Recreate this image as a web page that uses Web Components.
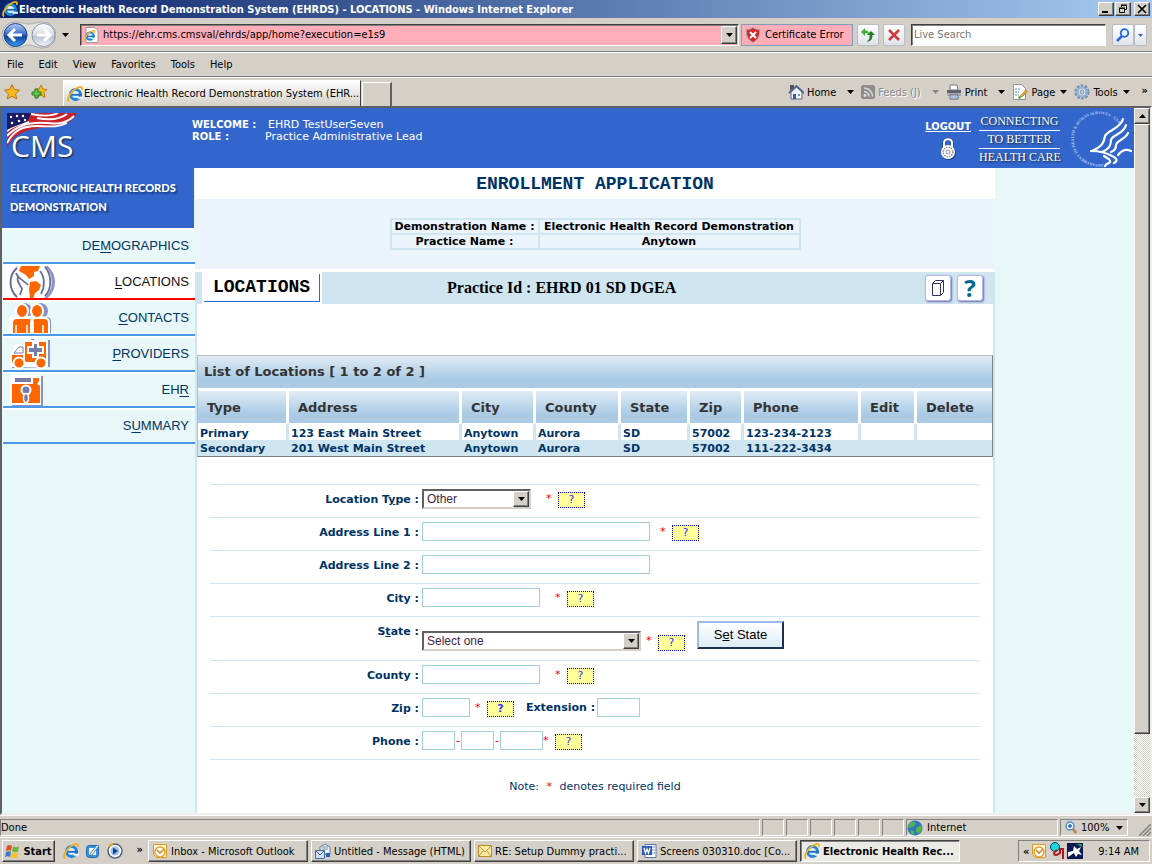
<!DOCTYPE html>
<html lang="en">
<head>
<meta charset="utf-8">
<title>Electronic Health Record Demonstration System (EHRDS) - LOCATIONS</title>
<style>
  html, body {
    margin: 0;
    height: 100%;
  }

  body {
    --face: #d4d0c8;
    --shadow: #808080;
    --blue: #3366cc;
    --pale: #cfe5f0;
    --mint: #e8f7f8;
    --navy: #003366;
    --ui: "DejaVu Sans Condensed", "Noto Sans", sans-serif;
    --text: "DejaVu Sans", sans-serif;
    background: var(--face);
    color: #000;
    font: 11px/13px var(--ui);
    overflow: hidden;
  }
</style>
</head>
<body>
<browser-window></browser-window>

<script>
const define = (name, css, html) => {
  const template = document.createElement('template');
  template.innerHTML = `<style>*, :host { box-sizing: border-box; } ${css}</style>${html}`;

  window.customElements.define(name, class extends HTMLElement {
    constructor() {
      super();
      this.attachShadow({ mode: 'open' });
      this.shadowRoot.appendChild(template.content.cloneNode(true));
    }
  });
};

const ie = `
  <circle cx="8.500" cy="8.500" r="5" fill="#d9f0fd" stroke="#2486d8" stroke-width="3"/>
  <path d="M10 10.800h6v2h-5z" fill="#eef3f5"/>
  <path d="M4 8.800h11" stroke="#1c6cc0" stroke-width="1.800"/>
  <path d="M2 15.500C-1 13 4 5 10 2c4-2 6-1 4.500 2" fill="none" stroke="#f2b01e" stroke-width="1.800"/>`;

// name: [width, height, markup]
const icons = {
  ie: [16, 16, ie],
  iepage: [16, 16, `<path d="M3 .5h9l3 3v12H3z" fill="#fff" stroke="#999"/><g transform="translate(1 3) scale(.72)">${ie}</g>`],
  down: [7, 4, '<path d="M0 0h7L3.500 4z"/>'],
  up: [7, 4, '<path d="M0 4h7L3.500 0z"/>'],
  greydown: [7, 4, '<path d="M0 0h7L3.500 4z" fill="#888"/>'],
  min: [12, 10, '<path d="M2 7h6v2H2z"/>'],
  restore: [12, 10, '<path d="M4.500 3V1.500h5v4H8M4 1h6" fill="none" stroke="#000"/><path d="M2.500 4.500h5v4h-5zM2 4h6" fill="none" stroke="#000"/>'],
  close: [12, 10, '<path d="M2 1l8 8M10 1l-8 8" stroke="#000" stroke-width="1.700"/>'],
  back: [54, 28, `
    <defs>
      <linearGradient id="b" x2="0" y2="1"><stop stop-color="#b4ccf2"/><stop offset=".5" stop-color="#2f66c4"/><stop offset=".55" stop-color="#0f3f9c"/><stop offset="1" stop-color="#3ca0f0"/></linearGradient>
      <linearGradient id="f" x2="0" y2="1"><stop stop-color="#fff"/><stop offset=".5" stop-color="#d5dae4"/><stop offset=".55" stop-color="#b9c3d6"/><stop offset="1" stop-color="#eef2fa"/></linearGradient>
    </defs>
    <path d="M13 1C20 1 22 3 27 3s7-2 14-2a13 13 0 0 1 0 26c-7 0-9-3-14-3s-7 3-14 3A13 13 0 0 1 13 1z" fill="#e4e2dd" stroke="#aaa"/>
    <circle cx="13.500" cy="14" r="11.500" fill="url(#b)" stroke="#1c3f86"/>
    <circle cx="41.500" cy="14" r="11.500" fill="url(#f)" stroke="#8b95a8"/>
    <path d="M20 14H8m5-6-6 6 6 6" fill="none" stroke="#fff" stroke-width="3"/>
    <path d="M35 14h12m-5-6 6 6-6 6" fill="none" stroke="#fff" stroke-width="3"/>`],
  shield: [16, 16, '<path d="M8 .5c2 1.500 4 2 6.500 2 .5 6-1 10-6.500 13C2.500 12.500 1 8.500 1.500 2.500 4 2.500 6 2 8 .5z" fill="#d22a2a" stroke="#a9a9a9"/><path d="M5 5l6 6M11 5l-6 6" stroke="#fff" stroke-width="2"/>'],
  refresh: [16, 16, '<path d="M1 5l4-4v2.500c3 0 4 1 4 4C8 6.500 7 6 5 6.500V9z" fill="#3fae3c"/><path d="M15 8l-4-4-4 4h2.500c.5 3-.5 5-3 6.500 4 .5 6-2 6-6.500z" fill="#1f7d26"/>'],
  stop: [14, 14, '<path d="M2 2l10 10M12 2L2 12" stroke="#d3383c" stroke-width="2.500"/>'],
  search: [14, 14, '<circle cx="8.500" cy="5" r="3.800" fill="#e9f3ff" stroke="#2567d8" stroke-width="1.800"/><path d="M6 8l-5 5" stroke="#2567d8" stroke-width="2.500"/>'],
  bluedown: [5, 3, '<path d="M0 0h5L2.500 3z" fill="#2b6fc6"/>'],
  star: [16, 16, '<path d="M8 .5l2.300 5 5.200.6-3.900 3.600 1.100 5.300L8 12.300 3.300 15l1.100-5.300L.5 6.100l5.200-.6z" fill="#f8b820" stroke="#b97514"/>'],
  addstar: [16, 16, '<path d="M10 1l2 4 4 .5-3 3 .8 5-4-2.500-4 2.500 1-5-3-3L8 5z" fill="#f8b820" stroke="#c07c15"/><path d="M4 5h3v3h3v3H7v3H4v-3H1V8h3z" fill="#65c64a" stroke="#1c7a1c"/>'],
  home: [16, 16, '<path d="M3 8v7h11V8L8.500 3z" fill="#eef3ff" stroke="#667"/><path d="M2 1h4v3L2 7z" fill="#555"/><path d="M1 9l7.500-7L16 9" fill="none" stroke="#52688f" stroke-width="2"/><path d="M5 10h3v5H5z" fill="#345a9c"/><path d="M10 10h2v2h-2z" fill="#6a8cc8"/>'],
  feed: [14, 14, '<rect width="14" height="14" rx="2" fill="#8d8d8d"/><circle cx="4" cy="10.500" r="1.400" fill="#ddd"/><path d="M3 6.500a5 5 0 0 1 5 5M3 3a8.500 8.500 0 0 1 8.500 8.500" fill="none" stroke="#ddd" stroke-width="1.500"/>'],
  print: [16, 16, '<path d="M4 1h7l1 5H4z" fill="#fff" stroke="#777"/><path d="M1 6h14v5H1z" fill="#5f6470"/><path d="M1 9h14v3H1z" fill="#a7abb5"/><path d="M4 11h8v4H4z" fill="#fff" stroke="#557"/><path d="M5 13h6" stroke="#4d94d8"/>'],
  page: [16, 16, '<path d="M1.500.5h8l4 4v11h-12z" fill="#fff" stroke="#8a93a2"/><path d="M3 5h5M3 8h4M3 11h4" stroke="#5c86c0" stroke-dasharray="2 1"/><path d="M8 13l1-2 5-5 1.500 1.500-5 5z" fill="#e9a02c" stroke="#a36b1a" stroke-width=".6"/><path d="M8.500 13l-2 1" stroke="#28a028" stroke-width="2"/>'],
  gear: [16, 16, '<circle cx="8" cy="8" r="6.300" fill="none" stroke="#6d8db3" stroke-width="2.500" stroke-dasharray="2.500 1.450"/><circle cx="8" cy="8" r="4.500" fill="#e6f0fa" stroke="#93b1d2" stroke-width="2.500"/><circle cx="8" cy="8" r="2" fill="#d4d0c8" stroke="#6d8db3"/>'],
  lock: [18, 24, '<path d="M5 12V6c0-5 8-5 8 0v5" fill="none" stroke="#1b3a80" stroke-width="3"/><path d="M5 12V6c0-5 8-5 8 0v5" fill="none" stroke="#fff" stroke-width="2"/><circle cx="10" cy="16" r="7" fill="#1f458f"/><circle cx="9" cy="15" r="7" fill="#fff"/><circle cx="9" cy="15" r="4.800" fill="none" stroke="#777" stroke-width="1.200" stroke-dasharray="1.500 1"/><circle cx="9" cy="15" r="2" fill="none" stroke="#888"/>'],
  flag: [70, 36, `
    <path d="M0 0h70c-4 8-12 13-24 14C26 15 6 18 0 36z" fill="#c9202a"/>
    <path d="M30 5c10 2 22 2 30-4M67 3c-8 8-18 8-28 7-14-1-28 1-39 13M60 10C50 15 40 13 30 13 16 13 7 17 0 30M24 1c10 2 20 3 27-1M22 9C12 11 5 13 0 18" fill="none" stroke="#fff" stroke-width="1.900"/>
    <path d="M0 0h24l-3 8C14 12 6 13 0 17z" fill="#1c1c62"/>
    <g fill="#fff"><circle cx="4" cy="4" r="1.200"/><circle cx="10" cy="3" r="1.200"/><circle cx="16" cy="3" r="1.200"/><circle cx="5" cy="10" r="1.200"/><circle cx="12" cy="8" r="1.200"/><circle cx="18" cy="7" r="1.200"/></g>`],
  seal: [64, 60, `
    <defs><path id="ring" d="M33.300 55.600A25 25 0 1 1 51.500 20.500"/></defs>
    <text font-family="Liberation Serif, serif" font-size="4" font-weight="bold" fill="#b9cdf2"><textPath href="#ring">DEPARTMENT OF HEALTH &amp; HUMAN SERVICES · USA</textPath></text>
    <g fill="none" stroke="#fff" stroke-width="2.200" stroke-linecap="round" stroke-linejoin="round">
      <path d="M53 11C51 20 37 23 35 28c-1 6-2 10-13 15"/>
      <path d="M56 17C54 26 42 27 41 32c0 6-2 9-9 12"/>
      <path d="M58 25C56 31 47 32 46 37c0 4-2 6-5 7"/>
      <path d="M21 43c10 0 16 2 21 5 5 2 6 5 2 7M34 48c5 3 8 5 5 7-2 1-3 1-4 3M61 43c-6-3-10 0-13 4"/>
    </g>`],
  globe: [46, 36, `
    <circle cx="25" cy="18" r="21" fill="#8b8fc4"/><circle cx="22" cy="18" r="21" fill="#fff" stroke="#b4b6dc"/>
    <path d="M12 2h19l-2 5-4 1v4l-5 3-3-4-7-4zM21 18l6-1 5 4-2 5-4 3-2 6-3-1-1-8z" fill="#f60"/>
    <path d="M8 4C-1 12 0 26 8 33M36 3c7 8 7 22 0 29M7 9c2 6 9 8 12 12M9 13c-2 5 3 8 4 12l-2 6M31 7c5 6 5 16 1 23" fill="none" stroke="#6a6d90" stroke-width="1.800"/>`],
  people: [44, 30, `
    <g fill="#8b8fc4"><circle cx="15" cy="8" r="8"/><circle cx="31" cy="8" r="8"/><path d="M2 30V19q0-5 5-5h30q5 0 5 5v11z"/></g>
    <path d="M0 30V19q0-6 6-6h27q7 0 7 6v11" fill="#fff"/>
    <g fill="#f60" stroke="#fff" stroke-width="2"><ellipse cx="13" cy="8" rx="6" ry="7"/><ellipse cx="28" cy="8" rx="6" ry="7"/><path d="M3 31V20q0-5 5-5h11q5 0 5 5v11M22 31V20q0-5 5-5h8q5 0 5 5v11"/></g>
    <path d="M7 22v8M18 22v8M34 22v8" stroke="#fff" stroke-width="1.500"/>`],
  ambulance: [42, 32, `
    <path d="M3 30V16l7-9h7V1h8v1h16v27z" fill="#8b8fc4"/>
    <path d="M1 29V15l7-9h7V0h7v2h17v27z" fill="#fff"/>
    <path d="M16 4h21v20H16zM3 17h11v8H3z" fill="#f60"/>
    <path d="M5 15l5-6h4v6z" fill="#fff" stroke="#777ba8"/>
    <path d="M23 4h7v4h5v8h-5v4h-7v-4h-5V8h5z" fill="#fff"/>
    <path d="M25 6h3v4h5v4h-5v4h-3v-4h-5v-4h5z" fill="#777ba8"/>
    <g fill="#f60" stroke="#fff" stroke-width="2"><circle cx="10" cy="25" r="5.500"/><circle cx="32" cy="25" r="5.500"/></g>`],
  disk: [34, 32, `
    <path d="M3 2h31v30H3z" fill="#8b8fc4"/><path d="M1 1h31v30H1z" fill="#fff"/>
    <path d="M3 10h21V4h6v3l-2 3 3 2v17H3z" fill="#f60"/><path d="M6 4h16v4H6z" fill="#777ba8"/>
    <circle cx="17" cy="16" r="4.500" fill="#777ba8" stroke="#fff" stroke-width="2"/><ellipse cx="17" cy="24" rx="2.500" ry="4.500" fill="#777ba8" stroke="#fff" stroke-width="1.500"/>`],
  copy: [14, 18, '<path d="M1.500 4.500h8v12h-8z" fill="#fff" stroke="#336"/><path d="M1.500 4.500l3-3h8v12l-3 3M9.500 4.500l3-3" fill="none" stroke="#336"/>'],
  inet: [16, 16, '<circle cx="8" cy="8" r="7.500" fill="#2d72c4"/><path d="M3 3c3-2 6-1 6 1L6 7 3 8 1 7zM9 8l5-3 1 4-3 5-3-2zM3 10l4 1v4l-3-1z" fill="#51b548"/>'],
  zoom: [12, 14, '<circle cx="5" cy="5" r="4" fill="#eaf4ff" stroke="#4f86c6" stroke-width="1.400"/><path d="M3 5h4M5 3v4" stroke="#1f5fb8" stroke-width="1.400"/><path d="M8 8l3 4" stroke="#b58142" stroke-width="2.500"/>'],
  grip: [12, 12, '<path d="M0 12L12 0M4 12l8-8M8 12l4-4" stroke="#808080" stroke-width="1.500"/>'],
  win: [16, 14, '<path d="M2 2q3-2 5 0L6 7q-2-1.500-5 0z" fill="#e44d25"/><path d="M8 2.500q3 1.500 6 0l-1 5q-3 1.500-6 0z" fill="#6fb43a"/><path d="M1 8q3-1.500 5 0l-1 5q-2-1.500-5 0z" fill="#3b78d0"/><path d="M7 8.500q3 1.500 6 0l-1 5q-3 1.500-6 0z" fill="#f3c22c"/>'],
  desktop: [16, 16, '<rect x="1.500" y="2.500" width="12" height="12" rx="3" fill="#3b93e0" stroke="#1c62a8"/><path d="M4 5h7v7H4z" fill="#fff"/><path d="M5 11l7-9 2 1-7 9-2 1z" fill="#e8f3ff" stroke="#245ea8" stroke-width=".8"/>'],
  media: [16, 16, '<circle cx="8" cy="8" r="7" fill="#fff" stroke="#55627a" stroke-width="1.500"/><circle cx="8" cy="8" r="4.500" fill="#9cc0f0"/><path d="M6 4.500l5 3.500-5 3.500z" fill="#1c3f90"/><path d="M2 4a7 7 0 0 1 4-3" stroke="#e2a22c" stroke-width="2" fill="none"/>'],
  outlook: [16, 16, '<path d="M1.500 1.500h13v13h-10l-3-3z" fill="#fff5d8" stroke="#dc9a22"/><circle cx="8" cy="9" r="5" fill="#fff" stroke="#e3a02e" stroke-width="1.500"/><path d="M5 7l3 3 4-4" fill="none" stroke="#d28e18" stroke-width="1.600"/>'],
  message: [16, 16, '<path d="M5 4l5-3 5 3v7H5z" fill="#e8f1ff" stroke="#5c7ea8"/><path d="M7 4h6M7 6h6" stroke="#888"/><path d="M.5 7.500h9v8h-9z" fill="#cfe0f7" stroke="#4a6a96"/><path d="M1 8l4 4 4-4" fill="none" stroke="#4a6a96"/><path d="M11 10h4v4h-4z" fill="#2d5db2"/>'],
  mail: [14, 12, '<path d="M.5.500h13v11H.500z" fill="#ffe9a6" stroke="#bf8a22"/><path d="M1 1l6 6 6-6M1 11l4-5M13 11L9 6" fill="none" stroke="#c99430"/>'],
  word: [16, 16, '<path d="M4 1.500h11v13H4z" fill="#fff" stroke="#5675ae"/><path d="M11 4h3M11 7h3M11 10h3" stroke="#7894c8"/><path d="M1 3h10v9H1z" fill="#2c5db4"/><path d="M3 5l1.500 5L6 6l1.500 4L9 5" fill="none" stroke="#fff" stroke-width="1.300"/>'],
  net: [16, 18, '<circle cx="6" cy="5" r="4.500" fill="#19d8dc" stroke="#045"/><path d="M8 8c-6 4-2 7 3 3V7h3v10" fill="none" stroke="#b01820" stroke-width="2"/>'],
  tools: [16, 16, '<path fill="#0b1a55" d="M0 0h16v16H0z"/><path d="M1 9l5-1 1-5 3 3 4-2-2 4 3 4-4-1-2 3-2-4-6 4z" fill="#fff"/><path d="M9 1h6v3z" fill="#25a045"/>']
};

window.customElements.define('ui-icon', class extends HTMLElement {
  constructor() {
    super();
    this.attachShadow({ mode: 'open' });
  }

  connectedCallback() {
    const [w, h, body] = icons[this.getAttribute('name')];
    this.shadowRoot.innerHTML = `
      <style>:host { display: inline-block; flex: none; line-height: 0; }</style>
      <svg width="${w}" height="${h}" viewBox="0 0 ${w} ${h}" aria-hidden="true">${body}</svg>`;
  }
});

const raised = `
  padding: 0;
  display: flex;
  align-items: center;
  justify-content: center;
  font: inherit;
  color: inherit;
  background: var(--face);
  border: 1px solid;
  border-color: #fff #404040 #404040 #fff;
  box-shadow: inset -1px -1px var(--shadow);
`;

define('title-bar', `
  :host {
    display: flex;
    align-items: center;
    height: 18px;
    padding: 0 2px;
    gap: 1px;
    background: linear-gradient(90deg, #0a246a, #a6caf0);
    color: #fff;
    font-weight: bold;
  }
  h1 { flex: 1; margin: 0; font: inherit; white-space: nowrap; }
  button { ${raised} width: 16px; height: 14px; }
  .close { margin-left: 2px; }
`, `
  <ui-icon name="ie"></ui-icon>
  <h1>Electronic Health Record Demonstration System (EHRDS) - LOCATIONS - Windows Internet Explorer</h1>
  <button aria-label="Minimize"><ui-icon name="min"></ui-icon></button>
  <button aria-label="Restore"><ui-icon name="restore"></ui-icon></button>
  <button class="close" aria-label="Close"><ui-icon name="close"></ui-icon></button>
`);

define('address-bar', `
  :host {
    display: flex;
    align-items: center;
    height: 34px;
    padding: 0 5px 0 2px;
    gap: 4px;
    border-bottom: 1px solid var(--shadow);
  }
  .arrows { padding: 0; border: 0; background: none; display: flex; }
  .more { margin: 0 7px 0 2px; }
  .url, .search {
    display: flex;
    align-items: center;
    height: 22px;
    border: 1px solid;
    border-color: #404040 #fff #fff #404040;
    box-shadow: inset 1px 1px var(--shadow);
  }
  .url { flex: 1; padding: 1px 1px 1px 2px; gap: 2px; background: #ffaeb9; }
  input { flex: 1; min-width: 0; border: 0; padding: 0 2px; background: none; font: inherit; color: #000; }
  .search { width: 195px; background: #fff; margin-left: 2px; }
  .search input::placeholder { color: #777; opacity: 1; }
  .drop { ${raised} width: 16px; height: 18px; }
  .cert {
    display: flex;
    align-items: center;
    gap: 4px;
    width: 112px;
    height: 22px;
    padding: 0 3px;
    margin-left: -2px;
    border: 1px solid #7f9db9;
    background: #ffaeb9;
    font: inherit;
    color: #000;
  }
  .tool {
    display: flex;
    align-items: center;
    justify-content: center;
    width: 22px;
    height: 22px;
    padding: 0;
    border: 1px solid #b9bcc4;
    border-radius: 2px;
    background: linear-gradient(#fff, #dfe3ea);
  }
  .pair { display: flex; margin-left: 2px; }
  .thin { width: 13px; }
`, `
  <button class="arrows" aria-label="Back and forward"><ui-icon name="back"></ui-icon></button>
  <ui-icon class="more" name="down"></ui-icon>
  <div class="url">
    <ui-icon name="iepage"></ui-icon>
    <input type="text" aria-label="Address" value="https://ehr.cms.cmsval/ehrds/app/home?execution=e1s9">
    <button class="drop" aria-label="Show addresses"><ui-icon name="down"></ui-icon></button>
  </div>
  <button class="cert"><ui-icon name="shield"></ui-icon>Certificate Error</button>
  <button class="tool" aria-label="Refresh"><ui-icon name="refresh"></ui-icon></button>
  <button class="tool" aria-label="Stop"><ui-icon name="stop"></ui-icon></button>
  <div class="search"><input type="text" aria-label="Search" placeholder="Live Search"></div>
  <div class="pair">
    <button class="tool" aria-label="Search"><ui-icon name="search"></ui-icon></button>
    <button class="tool thin" aria-label="Search options"><ui-icon name="bluedown"></ui-icon></button>
  </div>
`);

define('menu-bar', `
  :host {
    display: flex;
    align-items: center;
    height: 25px;
    padding: 0 7px;
    gap: 15px;
    border-top: 1px solid #fff;
    border-bottom: 1px solid var(--shadow);
  }
  a { color: inherit; text-decoration: none; }
`, `
  <a href="#">File</a><a href="#">Edit</a><a href="#">View</a>
  <a href="#">Favorites</a><a href="#">Tools</a><a href="#">Help</a>
`);

define('tool-link', `
  :host { display: flex; align-items: center; }
  button { display: flex; align-items: center; gap: 3px; padding: 0; border: 0; background: none; font: inherit; color: inherit; text-shadow: inherit; }
  .drop, ::slotted([slot=drop]) { margin-left: var(--drop, 5px); }
`, `
  <button><slot name="icon"></slot><span><slot></slot></span></button>
  <slot name="drop"><ui-icon class="drop" name="down"></ui-icon></slot>
`);

define('tab-bar', `
  :host {
    display: flex;
    align-items: center;
    height: 29px;
    padding: 0 4px;
    border-top: 1px solid #fff;
  }
  .stars { display: flex; gap: 11px; width: 59px; }
  .tab {
    display: flex;
    align-items: center;
    align-self: flex-end;
    gap: 1px;
    width: 298px;
    height: 26px;
    padding: 0 0 0 3px;
    border: solid;
    border-width: 1px 1px 0;
    border-color: #fff #404040 #404040 #fff;
    background: linear-gradient(#fff, #d4d0c8);
    white-space: nowrap;
  }
  .new {
    align-self: flex-end;
    width: 30px;
    height: 24px;
    margin-left: 1px;
    padding: 0;
    border: solid;
    border-width: 1px 2px 0 1px;
    border-color: #fff #606060 #fff #fff;
    background: var(--face);
  }
  .tools { display: flex; align-items: center; gap: 7px; margin-left: auto; }
  .wide { --drop: 11px; }
  .off { color: #888; text-shadow: 1px 1px #fff; }
  .chev { align-self: flex-start; margin-left: 5px; font-weight: bold; }
`, `
  <div class="stars"><ui-icon name="star"></ui-icon><ui-icon name="addstar"></ui-icon></div>
  <div class="tab"><ui-icon name="ie"></ui-icon>Electronic Health Record Demonstration System (EHR...</div>
  <button class="new" aria-label="New tab"></button>
  <div class="tools">
    <tool-link class="wide"><ui-icon slot="icon" name="home"></ui-icon>Home</tool-link>
    <tool-link class="wide off"><ui-icon slot="icon" name="feed"></ui-icon>Feeds (J)<ui-icon slot="drop" name="greydown"></ui-icon></tool-link>
    <tool-link class="wide"><ui-icon slot="icon" name="print"></ui-icon>Print</tool-link>
    <tool-link><ui-icon slot="icon" name="page"></ui-icon>Page</tool-link>
    <tool-link><ui-icon slot="icon" name="gear"></ui-icon>Tools</tool-link>
    <span class="chev">»</span>
  </div>
`);

define('scroll-bar', `
  :host {
    display: flex;
    flex-direction: column;
    flex: none;
    width: 16px;
    background: repeating-conic-gradient(#fff 0 25%, #d4d0c8 0 50%) 0 0 / 2px 2px;
  }
  button, .thumb { ${raised} width: 16px; height: 16px; flex: none; }
  .thumb { flex: 611; }
  .track { flex: 63; }
`, `
  <button aria-label="Scroll up"><ui-icon name="up"></ui-icon></button>
  <div class="thumb"></div>
  <div class="track"></div>
  <button aria-label="Scroll down"><ui-icon name="down"></ui-icon></button>
`);

define('site-header', `
  :host {
    display: flex;
    height: 60px;
    padding-left: 5px;
    background: var(--blue);
    color: #fff;
    font: 11px/12px var(--text);
  }
  .logo { display: grid; width: 185px; padding-top: 5px; align-content: start; }
  .logo > * { grid-area: 1 / 1; }
  .logo span { padding: 12px 0 0 4px; font: 30px/42px "Open Sans", sans-serif; text-shadow: 1px 1px 2px #123; }
  dl { display: grid; grid-template-columns: 73px auto; align-content: start; margin: 11px 0 0; white-space: nowrap; }
  dt { font-weight: bold; font-size: 10px; }
  dd { margin: 0; }
  .name { padding-left: 3px; }
  .out { margin-left: auto; padding-top: 12px; text-align: center; }
  a { color: inherit; font: bold 11px/13px "DejaVu Sans Condensed", sans-serif; }
  .out ui-icon { display: block; margin-top: 4px; }
  ul {
    list-style: none;
    width: 81px;
    margin: 5px 10px 0 8px;
    padding: 0;
    text-align: center;
    font: 12px/17px "Liberation Serif", serif;
    text-shadow: 1px 1px 2px #123;
    white-space: nowrap;
  }
  li + li { border-top: 1px solid #fff; }
`, `
  <div class="logo"><ui-icon name="flag"></ui-icon><span>CMS</span></div>
  <dl>
    <dt>WELCOME :</dt><dd class="name">EHRD TestUserSeven</dd>
    <dt>ROLE :</dt><dd>Practice Administrative Lead</dd>
  </dl>
  <div class="out"><a href="#">LOGOUT</a><ui-icon name="lock"></ui-icon></div>
  <ul><li>CONNECTING</li><li>TO BETTER</li><li>HEALTH CARE</li></ul>
  <ui-icon name="seal"></ui-icon>
`);

define('nav-item', `
  :host {
    display: block;
    height: 36px;
    margin-left: 1px;
    border-top: 2px solid #fff;
    border-bottom: 2px solid #4a98e8;
    color: var(--navy);
    font: 13px/32px "Liberation Sans", sans-serif;
  }
  :host([current]) { background: #fff; border-bottom-color: #f00; color: #111; }
  a { display: flex; align-items: center; justify-content: space-between; height: 32px; padding: 0 6px; color: inherit; text-decoration: none; overflow: hidden; }
  .name { margin-left: auto; }
`, `<a href="#"><slot name="icon"></slot><span class="name"><slot></slot></span></a>`);

define('side-nav', `
  :host { display: block; flex: none; width: 193px; background: var(--mint); }
  h2 {
    width: 192px;
    height: 60px;
    margin: 0;
    padding: 10px 8px;
    background: var(--blue);
    color: #fff;
    font: 900 11px/19px Lato, sans-serif;
    text-shadow: 2px 2px 2px #123a80;
    white-space: nowrap;
  }
  u { text-underline-offset: 2px; }
`, `
  <h2>ELECTRONIC HEALTH RECORDS<br>DEMONSTRATION</h2>
  <nav>
    <nav-item>DE<u>M</u>OGRAPHICS</nav-item>
    <nav-item current><ui-icon slot="icon" name="globe"></ui-icon><u>L</u>OCATIONS</nav-item>
    <nav-item><ui-icon slot="icon" name="people"></ui-icon><u>C</u>ONTACTS</nav-item>
    <nav-item><ui-icon slot="icon" name="ambulance"></ui-icon><u>P</u>ROVIDERS</nav-item>
    <nav-item><ui-icon slot="icon" name="disk"></ui-icon>EH<u>R</u></nav-item>
    <nav-item>S<u>U</u>MMARY</nav-item>
  </nav>
`);

define('enrollment-banner', `
  :host { display: block; background: #fff; }
  h2 {
    margin: 0;
    padding-top: 1px;
    color: var(--navy);
    text-align: center;
    font: bold 18px/30px "Liberation Mono", monospace;
  }
  .info { height: 70px; padding-top: 19px; margin-bottom: 3px; background: #ebf3fb; }
  table { width: 411px; margin: 0 auto; border-collapse: collapse; font: bold 11px/13px var(--text); text-align: center; white-space: nowrap; }
  th, td { border: 2px solid var(--pale); padding: 0; }
  th { width: 148px; }
`, `
  <h2>ENROLLMENT APPLICATION</h2>
  <div class="info">
    <table>
      <tr><th>Demonstration Name :</th><td>Electronic Health Record Demonstration</td></tr>
      <tr><th>Practice Name :</th><td>Anytown</td></tr>
    </table>
  </div>
`);

define('section-bar', `
  :host { display: flex; align-items: center; height: 32px; padding: 0 12px 0 7px; gap: 6px; background: var(--pale); }
  h3 {
    width: 120px;
    margin: 0;
    border: 2px solid #fff;
    background: #fff;
    text-align: center;
    font: bold 18px/27px "Liberation Mono", monospace;
  }
  h3 span { display: block; border: solid var(--blue); border-width: 0 1px 1px 0; }
  p { flex: 1; margin: 0; padding-left: 119px; font: bold 16px/20px "Liberation Serif", serif; }
  button {
    display: flex;
    align-items: center;
    justify-content: center;
    width: 26px;
    height: 26px;
    padding: 0;
    border: 1px solid #b8b8e8;
    border-radius: 3px;
    background: #fff;
    box-shadow: 1px 1px 2px #6a6aa8;
    color: #069;
    font: bold 24px/24px "Open Sans", sans-serif;
  }
`, `
  <h3><span>LOCATIONS</span></h3>
  <p>Practice Id : EHRD 01 SD DGEA</p>
  <button aria-label="Copy"><ui-icon name="copy"></ui-icon></button>
  <button>?</button>
`);

define('locations-table', `
  :host { display: block; margin-top: 51px; color: var(--navy); font: bold 11px/13px var(--text); }
  .frame { border: 1px solid; border-color: #bbb #808080 #808080 #bbb; }
  table { width: 100%; table-layout: fixed; border-collapse: separate; border-spacing: 0; white-space: nowrap; }
  caption, th {
    background: linear-gradient(#e1ecf5, #abcbe5 70%);
    color: #333;
    text-align: left;
    font-size: 13px;
  }
  caption { padding: 0 6px; line-height: 32px; border-bottom: 3px solid #fff; background-clip: padding-box; }
  th { height: 32px; padding: 1px 9px 0; border-right: 3px solid #fff; background-clip: padding-box; }
  td { padding: 2px 2px 0; border-right: 3px solid var(--pale); }
  th:last-child, td:last-child { border-right: 0; }
  .first td { border-top: 2px solid #fff; }
  .even { background: var(--pale); }
  .even td { padding-bottom: 1px; }
`, `
  <div class="frame"><table>
    <caption>List of Locations [ 1 to 2 of 2 ]</caption>
    <colgroup>
      <col style="width:91px"><col style="width:173px"><col style="width:74px"><col style="width:85px"><col style="width:69px"><col style="width:54px"><col style="width:117px"><col style="width:56px"><col>
    </colgroup>
    <thead><tr><th>Type</th><th>Address</th><th>City</th><th>County</th><th>State</th><th>Zip</th><th>Phone</th><th>Edit</th><th>Delete</th></tr></thead>
    <tbody>
      <tr class="first"><td>Primary</td><td>123 East Main Street</td><td>Anytown</td><td>Aurora</td><td>SD</td><td>57002</td><td>123-234-2123</td><td></td><td></td></tr>
      <tr class="even"><td>Secondary</td><td>201 West Main Street</td><td>Anytown</td><td>Aurora</td><td>SD</td><td>57002</td><td>111-222-3434</td><td></td><td></td></tr>
    </tbody>
  </table></div>
`);

define('help-key', `
  :host { display: block; flex: none; margin-top: 3px; }
  button {
    display: block;
    width: 27px;
    height: 16px;
    padding: 0;
    border: 1px dotted #00c;
    background: #ff9;
    color: #33f;
    font: inherit;
    line-height: 14px;
  }
`, `<button aria-label="Help"><slot>?</slot></button>`);

define('form-row', `
  :host {
    display: grid;
    grid-template-columns: 209px 1fr;
    column-gap: 3px;
    align-items: start;
    min-height: 33px;
    padding-top: 4px;
    border-bottom: 1px solid var(--pale);
  }
  .label { text-align: right; line-height: 22px; }
  .fields { display: flex; align-items: flex-start; }
  :host([tall]) { min-height: 44px; }
  :host([tall]) .fields { align-items: flex-end; height: 30px; }
`, `
  <div class="label"><slot name="label"></slot></div>
  <div class="fields"><slot></slot></div>
`);

define('drop-down', `
  :host { display: grid; align-items: center; }
  ::slotted(select), .arrow { grid-area: 1 / 1; }
  .arrow { ${raised} justify-self: end; width: 16px; height: 16px; margin-right: 2px; pointer-events: none; }
`, `<slot></slot><span class="arrow"><ui-icon name="down"></ui-icon></span>`);

define('location-form', `
  :host { display: block; margin: 27px 13px 0; color: var(--navy); font: 11px/20px var(--text); }
  form { border-top: 1px solid var(--pale); }
  label { font-weight: bold; white-space: nowrap; }
  input { width: 43px; height: 19px; padding: 0 2px; border: 1px solid #a3cfe3; background: #fff; font: inherit; }
  select {
    appearance: none;
    width: 109px;
    height: 20px;
    padding: 0 3px;
    border: 2px solid;
    border-color: #606060 var(--face) var(--face) #606060;
    border-radius: 0;
    background: #fff;
    color: #424;
    font: 12px/14px "Liberation Sans", sans-serif;
  }
  .street { width: 228px; }
  .town { width: 118px; }
  .zip { width: 48px; }
  .part { width: 33px; }
  .state { width: 219px; }
  i { width: 12px; flex: none; color: #f00; font-style: normal; }
  .near { margin-left: 5px; }
  .mid { margin-left: 10px; }
  .far { margin-left: 15px; }
  .dash { width: 6px; text-align: center; }
  .set {
    align-self: flex-start;
    width: 87px;
    height: 28px;
    margin-left: 12px;
    padding: 0;
    border: 2px solid;
    border-color: #9cbce8 #1c3050 #1c3050 #9cbce8;
    background: linear-gradient(#fff, #dcecf8);
    color: #000;
    font: 13px/20px "Liberation Sans", sans-serif;
  }
  .ext { margin-left: 12px; padding-right: 2px; }
  .bold { font-weight: bold; }
  p { margin: 17px 0 0; text-align: center; }
  p i { padding: 0 4px; }
`, `
  <form>
    <form-row>
      <label slot="label" for="type">Location T<u>y</u>pe :</label>
      <drop-down><select id="type"><option>Other</option></select></drop-down>
      <i class="far">*</i><help-key></help-key>
    </form-row>
    <form-row>
      <label slot="label" for="line1">Address Line 1 :</label>
      <input class="street" id="line1"><i class="mid">*</i><help-key></help-key>
    </form-row>
    <form-row>
      <label slot="label" for="line2">Address Line 2 :</label>
      <input class="street" id="line2">
    </form-row>
    <form-row>
      <label slot="label" for="city">City :</label>
      <input class="town" id="city"><i class="far">*</i><help-key></help-key>
    </form-row>
    <form-row tall>
      <label slot="label" for="state">S<u>t</u>ate :</label>
      <drop-down><select class="state" id="state"><option>Select one</option></select></drop-down>
      <i class="near">*</i><help-key></help-key>
      <button class="set" type="button">S<u>e</u>t State</button>
    </form-row>
    <form-row>
      <label slot="label" for="county">County :</label>
      <input class="town" id="county"><i class="far">*</i><help-key></help-key>
    </form-row>
    <form-row>
      <label slot="label" for="zip">Zip :</label>
      <input class="zip" id="zip"><i class="near">*</i><help-key class="bold"></help-key>
      <label class="ext" for="ext">Extension :</label><input id="ext">
    </form-row>
    <form-row>
      <label slot="label" for="area">Phone :</label>
      <input class="part" id="area"><i class="dash">-</i><input class="part" aria-label="Prefix"><i class="dash">-</i><input aria-label="Line number"><i>*</i><help-key></help-key>
    </form-row>
  </form>
  <p>Note: <i>*</i> denotes required field</p>
`);

define('web-page', `
  :host { display: flex; flex-direction: column; flex: 1; min-width: 0; background: var(--mint); }
  .body { display: flex; flex: 1; min-height: 0; }
  main { display: flex; flex-direction: column; width: 800px; }
  .content { flex: 1; border: solid var(--pale); border-width: 0 2px; background: #fff; }
`, `
  <site-header></site-header>
  <div class="body">
    <side-nav></side-nav>
    <main>
      <enrollment-banner></enrollment-banner>
      <section-bar></section-bar>
      <div class="content">
        <locations-table></locations-table>
        <location-form></location-form>
      </div>
    </main>
  </div>
`);

define('status-bar', `
  :host { display: flex; gap: 2px; height: 22px; padding: 3px 0 1px; border-top: 1px solid #fff; }
  div {
    display: flex;
    align-items: center;
    gap: 4px;
    width: 22px;
    border: 1px solid;
    border-color: var(--shadow) #fff #fff var(--shadow);
  }
  .done { flex: 1; }
  .zone { width: 152px; }
  .zoom { width: 68px; padding: 0 4px; }
  .zoom .drop { margin-left: auto; }
  ui-icon { flex: none; }
  .grip { align-self: flex-end; margin: 0 1px 0 9px; }
`, `
  <div class="done">Done</div>
  <div></div><div></div><div></div><div></div><div></div><div></div>
  <div class="zone"><ui-icon name="inet"></ui-icon>Internet</div>
  <div class="zoom"><ui-icon name="zoom"></ui-icon>100%<ui-icon class="drop" name="down"></ui-icon></div>
  <ui-icon class="grip" name="grip"></ui-icon>
`);

define('task-button', `
  :host { display: block; flex: 0 1 160px; min-width: 0; }
  button { ${raised} justify-content: flex-start; gap: 3px; width: 100%; height: 22px; padding: 0 3px; white-space: nowrap; overflow: hidden; }
  :host([active]) button {
    border-color: #404040 #fff #fff #404040;
    box-shadow: inset 1px 1px var(--shadow);
    background: #ebe9e4;
    font-weight: bold;
  }
`, `<button><slot name="icon"></slot><span><slot></slot></span></button>`);

define('task-bar', `
  :host { display: flex; align-items: center; gap: 3px; height: 27px; padding: 0 2px; border-top: 1px solid #fff; }
  .start { ${raised} width: 53px; height: 22px; font-weight: bold; gap: 2px; }
  .quick { display: flex; align-items: center; gap: 6px; width: 87px; padding-left: 5px; }
  .chev { align-self: flex-start; margin-left: auto; padding-right: 2px; font-weight: bold; }
  .tray {
    display: flex;
    align-items: center;
    gap: 2px;
    width: 132px;
    height: 22px;
    margin-left: auto;
    padding: 0 4px;
    border: 1px solid;
    border-color: var(--shadow) #fff #fff var(--shadow);
    white-space: nowrap;
  }
  time { margin-left: auto; padding-right: 6px; }
`, `
  <button class="start"><ui-icon name="win"></ui-icon>Start</button>
  <div class="quick"><ui-icon name="ie"></ui-icon><ui-icon name="desktop"></ui-icon><ui-icon name="media"></ui-icon><span class="chev">»</span></div>
  <task-button><ui-icon slot="icon" name="outlook"></ui-icon>Inbox - Microsoft Outlook</task-button>
  <task-button><ui-icon slot="icon" name="message"></ui-icon>Untitled - Message (HTML)</task-button>
  <task-button><ui-icon slot="icon" name="mail"></ui-icon>RE: Setup Dummy practi...</task-button>
  <task-button><ui-icon slot="icon" name="word"></ui-icon>Screens 030310.doc [Co...</task-button>
  <task-button active><ui-icon slot="icon" name="ie"></ui-icon>Electronic Health Rec...</task-button>
  <div class="tray"><b>«</b><ui-icon name="outlook"></ui-icon><ui-icon name="net"></ui-icon><ui-icon name="tools"></ui-icon><time>9:14 AM</time></div>
`);

define('browser-window', `
  :host { display: flex; flex-direction: column; height: 100vh; }
  .view {
    display: flex;
    flex: 1;
    min-height: 0;
    overflow: hidden;
    border: 2px solid;
    border-color: #606060 #f0eeea #f0eeea #606060;
  }
`, `
  <title-bar></title-bar>
  <address-bar></address-bar>
  <menu-bar></menu-bar>
  <tab-bar></tab-bar>
  <div class="view"><web-page></web-page><scroll-bar></scroll-bar></div>
  <status-bar></status-bar>
  <task-bar></task-bar>
`);
</script>
</body>
</html>
